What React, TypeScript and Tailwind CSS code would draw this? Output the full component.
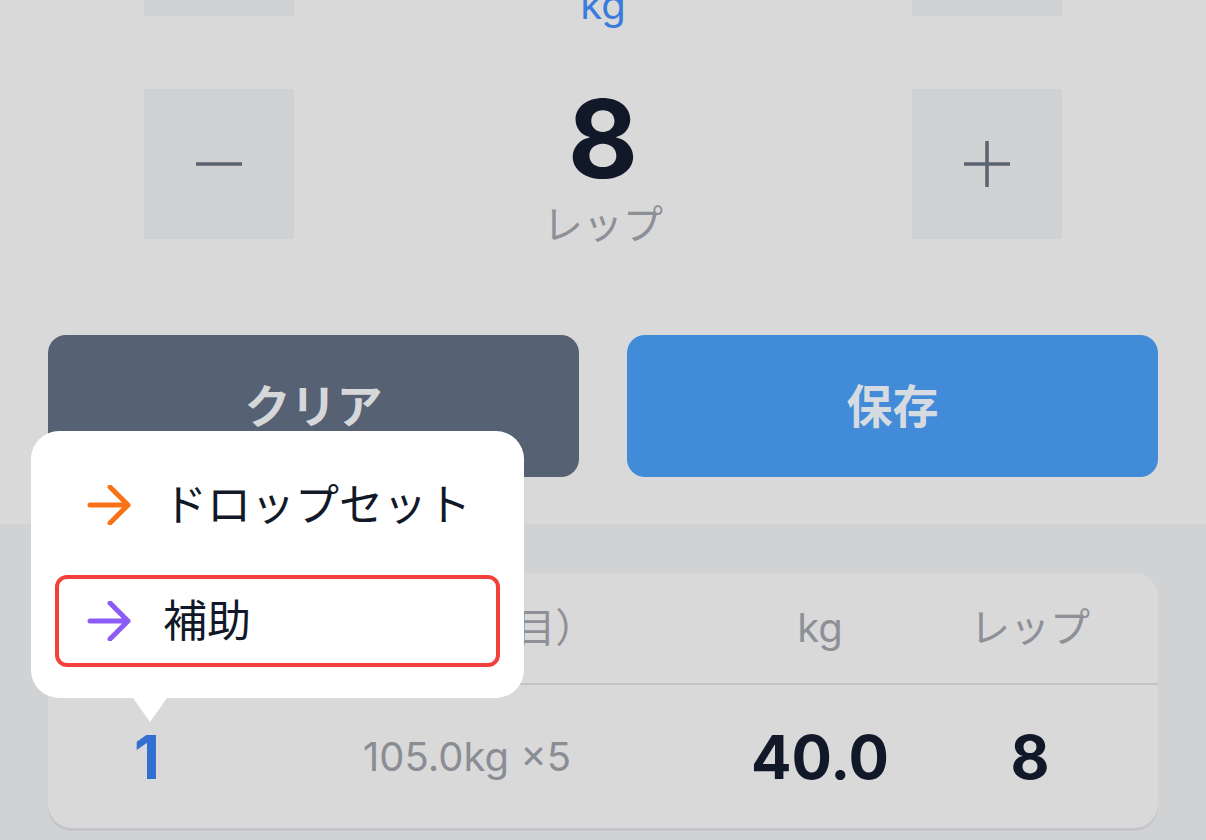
import React from 'react';

function Minus() {
  return (
    <svg width="46" height="46" viewBox="0 0 46 46" fill="none">
      <path d="M1 23h44" stroke="#5b6270" strokeWidth="3.5" strokeLinecap="round" />
    </svg>
  );
}

function Plus() {
  return (
    <svg width="46" height="46" viewBox="0 0 46 46" fill="none">
      <path d="M1 23h44M23 1v44" stroke="#5b6270" strokeWidth="3.5" strokeLinecap="round" />
    </svg>
  );
}

function Arrow({ color }: { color: string }) {
  return (
    <svg width="44" height="40" viewBox="0 0 44 40" fill="none">
      <path
        d="M3 20h38M23 2l18 18-18 18"
        stroke={color}
        strokeWidth="5"
        strokeLinecap="round"
        strokeLinejoin="round"
      />
    </svg>
  );
}

function Stepper({ value, unit, unitClass }: { value: string; unit: string; unitClass: string }) {
  return (
    <div className="flex justify-between px-[144px] h-[150px]">
      <div className="w-[150px] h-[150px] bg-[#d0d1d3] flex items-center justify-center">
        <Minus />
      </div>
      <div className="flex flex-col items-center">
        <div className="mt-[-4px] text-[108px] leading-none font-bold text-[#111827]">{value}</div>
        <div className={unitClass}>{unit}</div>
      </div>
      <div className="w-[150px] h-[150px] bg-[#d0d1d3] flex items-center justify-center">
        <Plus />
      </div>
    </div>
  );
}

export default function App() {
  return (
    <div className="relative w-[1206px] h-[840px] overflow-hidden bg-[#d9d9d9] font-[Inter,'Noto_Sans_CJK_JP',sans-serif] flex flex-col">
      {/* steppers */}
      <div className="mt-[-134px] flex flex-col gap-[73px]">
        <Stepper value="40.0" unit="kg" unitClass="mt-[15px] text-[40px] leading-none text-[#3a7bdc]" />
        <Stepper value="8" unit="レップ" unitClass="mt-[12px] text-[40px] leading-none text-[#8d9096]" />
      </div>

      {/* actions */}
      <div className="mt-[96px] px-[48px] flex gap-[48px]">
        <div className="flex-1 h-[142px] rounded-[18px] bg-[#566173] flex items-center justify-center text-[46px] font-bold text-[#d6d7d9]">
          クリア
        </div>
        <div className="flex-1 h-[142px] rounded-[18px] bg-[#428bd9] flex items-center justify-center text-[46px] font-bold text-[#d6dbe2]">
          保存
        </div>
      </div>

      {/* history */}
      <div className="mt-[47px] flex-1 bg-[#d1d2d4] px-[48px] pt-[49px]">
        <div className="rounded-[24px] bg-[#d9d9d9] shadow-[0_3px_0_#c4c5c8]">
          <div className="grid grid-cols-[198px_442px_264px_156px] h-[112px] items-center border-b-2 border-[#c3c4c7] text-[40px] text-[#8d9096]">
            <div className="text-center">セット</div>
            <div className="text-center">前回（1回目）</div>
            <div className="text-center">kg</div>
            <div className="text-center">レップ</div>
          </div>
          <div className="grid grid-cols-[198px_442px_264px_156px] h-[143px] items-center">
            <div className="text-center text-[60px] font-bold text-[#3170d0]">1</div>
            <div className="text-center text-[40px] text-[#8a8d93]">105.0kg ×5</div>
            <div className="text-center text-[60px] font-bold text-[#111827]">40.0</div>
            <div className="text-center text-[60px] font-bold text-[#111827]">8</div>
          </div>
        </div>
      </div>

      {/* popup menu */}
      <div className="absolute left-[31px] top-[431px] w-[493px] rounded-[28px] bg-white px-[24px] pt-[28px] pb-[31px] flex flex-col gap-[24px]">
        <div className="h-[92px] rounded-[12px] border-4 border-transparent pl-[28px] flex items-center gap-[32px] text-[44px] text-[#111827]">
          <Arrow color="#f97316" />
          <span>ドロップセット</span>
        </div>
        <div className="h-[92px] rounded-[12px] border-4 border-[#f2403a] pl-[28px] flex items-center gap-[32px] text-[44px] text-[#111827]">
          <Arrow color="#8b5cf6" />
          <span>補助</span>
        </div>
        <div className="absolute left-[102px] bottom-[-24px] w-0 h-0 border-l-[17px] border-r-[17px] border-t-[24px] border-l-transparent border-r-transparent border-t-white" />
      </div>
    </div>
  );
}
